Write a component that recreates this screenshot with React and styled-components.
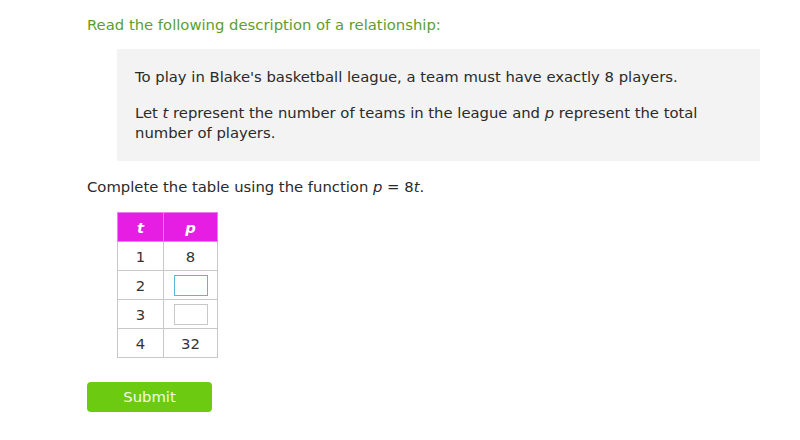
import React from 'react';
import styled, { createGlobalStyle } from 'styled-components';

const GlobalStyle = createGlobalStyle`
  body {
    margin: 0;
    background: #ffffff;
    font-family: "DejaVu Sans", Verdana, sans-serif;
    color: #333;
  }
`;

const Page = styled.div`
  width: 800px;
  height: 440px;
  padding: 15px 0 0 87px;
  box-sizing: border-box;
  font-size: 14.8px;
`;

const Heading = styled.div`
  line-height: 20px;
  color: #5b9e2e;
`;

const Description = styled.div`
  margin: 14px 0 0 30px;
  width: 643px;
  height: 112px;
  box-sizing: border-box;
  background: #f3f3f3;
  padding: 18px 18px;
  line-height: 20px;
  color: #2a2a2a;
  p {
    margin: 0 0 16px;
  }
`;

const Var = styled.i`
  font-family: "DejaVu Sans", Verdana, sans-serif;
`;

const Prompt = styled.div`
  margin-top: 16px;
  line-height: 20px;
  color: #2a2a2a;
`;

const Table = styled.table`
  margin: 15px 0 0 30px;
  border-collapse: collapse;
  color: #333;
  th, td {
    border: 1px solid #c8c8c8;
    height: 28px;
    padding: 0;
    text-align: center;
  }
  th {
    background: #e61ee4;
    border-color: #f07af0;
    color: #fff;
    font-weight: 600;
    font-style: italic;
  }
  th:first-child, td:first-child { width: 45px; }
  th:last-child, td:last-child { width: 53px; }
`;

const Blank = styled.input`
  width: 34px;
  height: 21px;
  box-sizing: border-box;
  border: 1px solid ${p => (p.$focused ? '#5fb3d4' : '#c8c8c8')};
  outline: none;
  vertical-align: middle;
  padding: 0 2px;
  font-size: 14px;
  font-family: inherit;
`;

const Submit = styled.button`
  margin-top: 24px;
  width: 125px;
  height: 30px;
  border: none;
  border-radius: 4px;
  background: #6ccb10;
  color: #f2fbe8;
  font-size: 14.8px;
  font-family: "DejaVu Sans", Verdana, sans-serif;
  padding: 0 0 2px;
`;

const rows = [
  { t: 1, p: '8' },
  { t: 2, p: null, focused: true },
  { t: 3, p: null },
  { t: 4, p: '32' },
];

export default function App() {
  return (
    <>
      <GlobalStyle />
      <Page>
        <Heading>Read the following description of a relationship:</Heading>
        <Description>
          <p>To play in Blake's basketball league, a team must have exactly 8 players.</p>
          <p>
            Let <Var>t</Var> represent the number of teams in the league and <Var>p</Var> represent the total number of players.
          </p>
        </Description>
        <Prompt>
          Complete the table using the function <Var>p</Var> = 8<Var>t</Var>.
        </Prompt>
        <Table>
          <thead>
            <tr>
              <th>t</th>
              <th>p</th>
            </tr>
          </thead>
          <tbody>
            {rows.map(r => (
              <tr key={r.t}>
                <td>{r.t}</td>
                <td>{r.p !== null ? r.p : <Blank $focused={r.focused} />}</td>
              </tr>
            ))}
          </tbody>
        </Table>
        <Submit>Submit</Submit>
      </Page>
    </>
  );
}
